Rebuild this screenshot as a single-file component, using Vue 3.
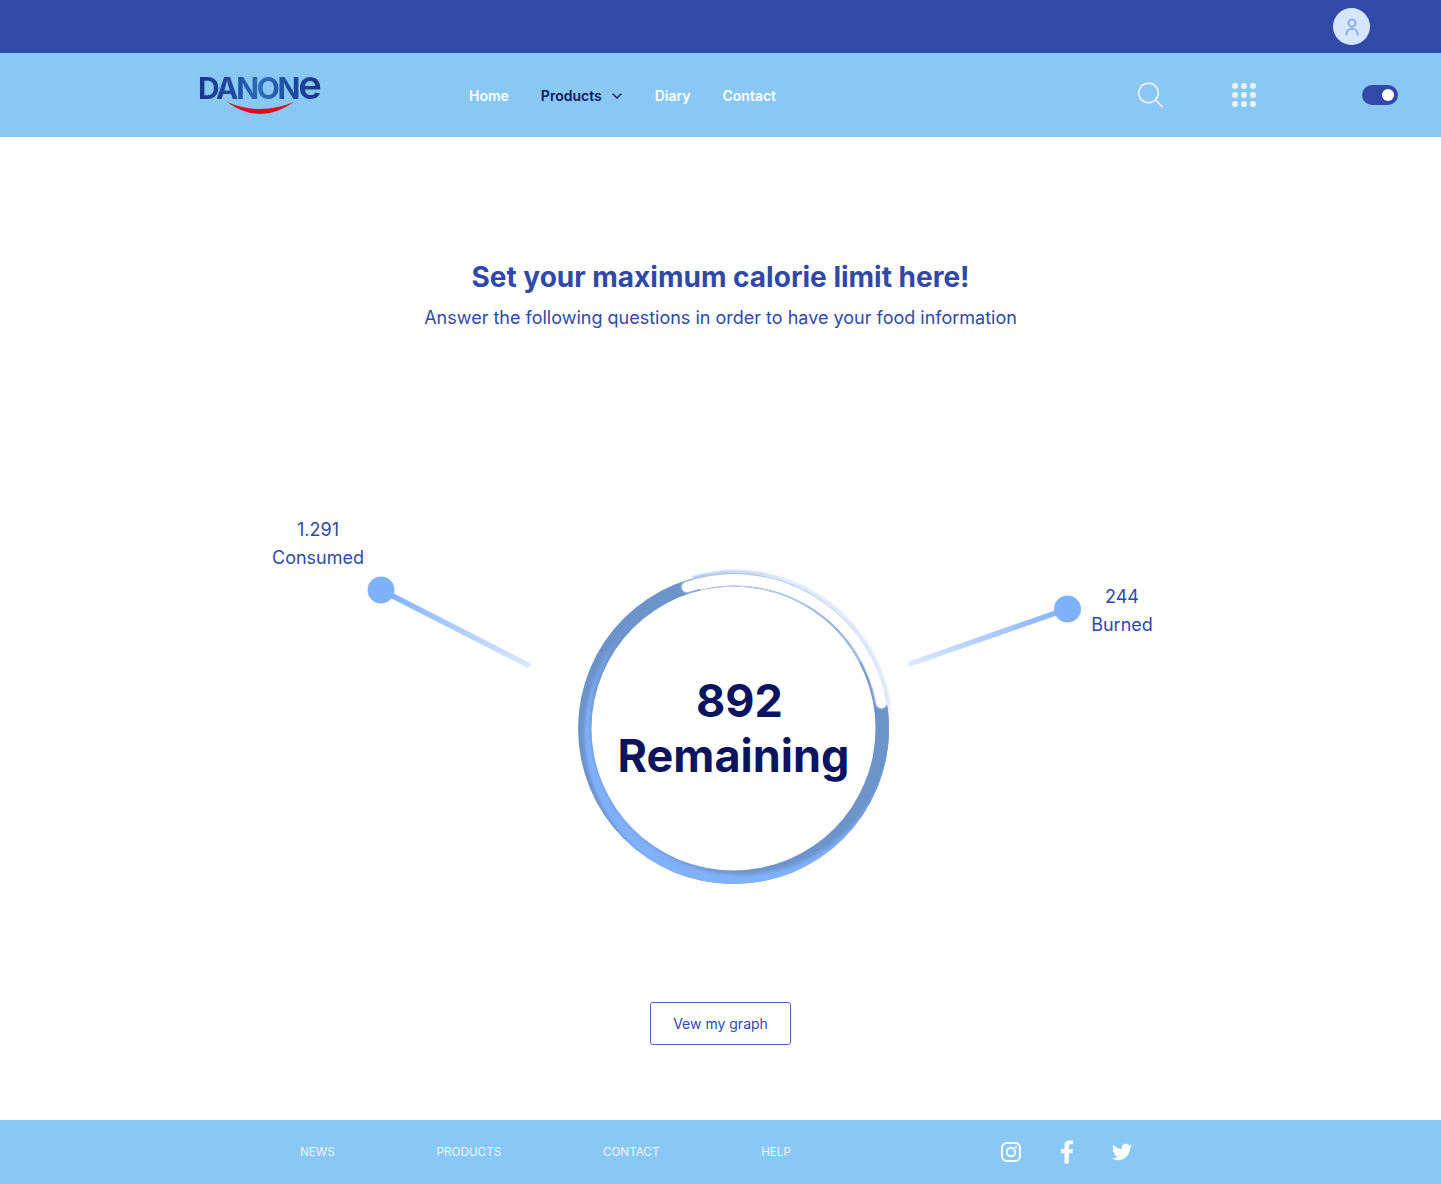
<script setup>
const navLinks = [
  { label: 'Home' },
  { label: 'Products', active: true },
  { label: 'Diary' },
  { label: 'Contact' },
]
const footerLinks = ['NEWS', 'PRODUCTS', 'CONTACT', 'HELP']
const dots = []
for (const y of [4, 13, 22]) for (const x of [4, 13, 22]) dots.push({ x, y })
</script>

<template>
  <div class="page">
    <div class="topbar">
      <div class="avatar">
        <svg width="16" height="20" viewBox="0 0 16 20" fill="none" stroke="#6f9cf5" stroke-width="1.5" stroke-linecap="round">
          <circle cx="8" cy="6" r="3.6" />
          <path d="M2.2 17.8c0-3.7 2.5-6 5.8-6s5.8 2.300 5.800 6" />
        </svg>
      </div>
    </div>

    <header class="navbar">
      <div class="logo">
        <span class="logo-text">DANON<span class="logo-e">e</span></span>
        <svg class="smile" width="68" height="14" viewBox="0 0 68 14">
          <path d="M0 1Q33 25 67 1Q33 15 0 1Z" fill="#e30a1f" />
        </svg>
      </div>
      <nav class="nav">
        <a v-for="l in navLinks" :key="l.label" class="nav-link" :class="{ active: l.active }">
          {{ l.label }}
          <svg v-if="l.active" class="chevron" width="10" height="6" viewBox="0 0 10 6" fill="none" stroke="#0c1460" stroke-width="1.3">
            <path d="M.7.8 5 5 9.3.8" />
          </svg>
        </a>
      </nav>
      <div class="tools">
        <svg width="26" height="26" viewBox="0 0 26 26" fill="none" stroke="#e6f2fc" stroke-width="1.700" stroke-linecap="round">
          <circle cx="11.500" cy="11" r="9.800" />
          <path d="M18.600 18 25 24.600" />
        </svg>
        <svg class="grid-icon" width="26" height="26" viewBox="0 0 26 26" fill="#eaf4fd">
          <circle v-for="(d, i) in dots" :key="i" :cx="d.x" :cy="d.y" r="3" />
        </svg>
        <div class="toggle"><span class="knob"></span></div>
      </div>
    </header>

    <main class="main">
      <h1 class="title">Set your maximum calorie limit here!</h1>
      <p class="subtitle">Answer the following questions in order to have your food information</p>

      <section class="stage">
        <svg class="diagram" width="1441" height="502" viewBox="0 0 1441 502">
          <defs>
            <linearGradient id="lineL" gradientUnits="userSpaceOnUse" x1="381" y1="90" x2="530" y2="166">
              <stop offset="0" stop-color="#80b1fb" />
              <stop offset="1" stop-color="#dbe9ff" />
            </linearGradient>
            <linearGradient id="lineR" gradientUnits="userSpaceOnUse" x1="1067" y1="109" x2="909" y2="164">
              <stop offset="0" stop-color="#80b1fb" />
              <stop offset="1" stop-color="#dbe9ff" />
            </linearGradient>
            <linearGradient id="innerEdge" gradientUnits="userSpaceOnUse" x1="760" y1="85" x2="878" y2="205">
              <stop offset="0" stop-color="#ffffff" />
              <stop offset="0.6" stop-color="#cfdcf2" />
              <stop offset="1" stop-color="#7f9fd3" />
            </linearGradient>
            <linearGradient id="rim" gradientUnits="userSpaceOnUse" x1="690" y1="76" x2="888" y2="205">
              <stop offset="0" stop-color="#8db0e6" />
              <stop offset="0.35" stop-color="#d9e6fb" />
              <stop offset="1" stop-color="#d4e3fc" />
            </linearGradient>
            <clipPath id="outer"><circle cx="733.5" cy="228.5" r="155.5" /></clipPath>
            <filter id="b1" x="-10%" y="-10%" width="120%" height="120%"><feGaussianBlur stdDeviation="2" /></filter>
            <filter id="b2" x="-10%" y="-10%" width="120%" height="120%"><feGaussianBlur stdDeviation="1.4" /></filter>
            <filter id="b3" x="-10%" y="-10%" width="120%" height="120%"><feGaussianBlur stdDeviation="0.8" /></filter>
          </defs>

          <path d="M381 90 528 165" stroke="url(#lineL)" stroke-width="5.500" stroke-linecap="round" />
          <path d="M1067 109 911 163.500" stroke="url(#lineR)" stroke-width="5.500" stroke-linecap="round" />
          <circle cx="381" cy="90" r="13.500" fill="#80b1fb" />
          <circle cx="1067.500" cy="109" r="13.500" fill="#80b1fb" />

          <path d="M720 72.500A156 156 0 0 1 889 212" fill="none" stroke="#dbe7fd" stroke-width="3" filter="url(#b2)" />
          <g clip-path="url(#outer)">
            <circle cx="733.500" cy="228.500" r="156" fill="#6d93cb" />
            <circle cx="739.500" cy="234.500" r="155" fill="#80b1fb" filter="url(#b2)" />
            <circle cx="741.500" cy="223.500" r="151" fill="#6d93cb" filter="url(#b1)" />
          </g>
          <circle cx="733.500" cy="228.500" r="142" fill="#fff" />
          <path d="M700 88A144.500 144.500 0 0 1 878 206" fill="none" stroke="url(#innerEdge)" stroke-width="4" />
          <path d="M693 78A155 155 0 0 1 888.500 205" fill="none" stroke="url(#rim)" stroke-width="2.500" filter="url(#b3)" />
          <path d="M687 87A149.500 149.500 0 0 1 881.500 203" fill="none" stroke="#fff" stroke-width="10.500" stroke-linecap="round" filter="url(#b3)" />
          <path d="M687 87A149.500 149.500 0 0 1 881.500 203" fill="none" stroke="#fff" stroke-width="10" stroke-linecap="round" />
          <path d="M715 87.500A142.500 142.500 0 0 1 860 162" fill="none" stroke="#c3d4f0" stroke-width="1" />
        </svg>

        <div class="label label-left"><span>1.291</span><span>Consumed</span></div>
        <div class="label label-right"><span>244</span><span>Burned</span></div>
        <div class="readout">
          <span class="readout-num">892</span>
          <span class="readout-word">Remaining</span>
        </div>
      </section>

      <button class="graph-btn">Vew my graph</button>
    </main>

    <footer class="footer">
      <nav class="foot-nav">
        <a v-for="f in footerLinks" :key="f">{{ f }}</a>
      </nav>
      <div class="social">
        <svg width="22" height="22" viewBox="0 0 22 22" fill="none" stroke="#fff" stroke-width="2">
          <rect x="2" y="2" width="18" height="18" rx="5" />
          <circle cx="11" cy="11" r="4.200" />
          <circle cx="16" cy="6" r="1.100" fill="#fff" stroke="none" />
        </svg>
        <svg width="14" height="24" viewBox="0 0 14 24" fill="#fff">
          <path d="M13 .4H9.700C6.400.4 4.500 2.400 4.500 5.700V9H.9v4.200h3.600V23.600h4.400V13.200h3.500l.6-4.200H8.900V6.200c0-1.300.6-1.900 1.900-1.900H13z" />
        </svg>
        <svg width="20" height="20" viewBox="0 0 24 24" fill="#fff">
          <path d="M23.95 4.57a10 10 0 0 1-2.82.77 4.96 4.96 0 0 0 2.16-2.72c-.95.55-2 .95-3.12 1.18a4.92 4.92 0 0 0-8.38 4.48C7.690 8.100 4.070 6.130 1.640 3.160a4.820 4.820 0 0 0-.66 2.470c0 1.710.87 3.210 2.190 4.100a4.900 4.900 0 0 1-2.230-.62v.06a4.920 4.920 0 0 0 3.950 4.830 5 5 0 0 1-2.210.08 4.940 4.940 0 0 0 4.600 3.420A9.870 9.870 0 0 1 0 19.540a13.940 13.940 0 0 0 7.550 2.210c9.050 0 14-7.500 14-13.980 0-.21 0-.42-.02-.63a9.940 9.940 0 0 0 2.460-2.550z" />
        </svg>
      </div>
    </footer>
  </div>
</template>

<style scoped>
.page {
  width: 1441px;
  font-family: Inter, "Liberation Sans", sans-serif;
  background: #fff;
  color: #3049a8;
}
.topbar {
  height: 53px;
  background: #314aa8;
  display: flex;
  align-items: center;
  justify-content: flex-end;
  padding-right: 71px;
  box-sizing: border-box;
}
.avatar {
  width: 37px;
  height: 37px;
  border-radius: 50%;
  background: #d6e6ff;
  display: flex;
  align-items: center;
  justify-content: center;
}
.navbar {
  height: 84px;
  background: #89c7f5;
  display: flex;
  align-items: center;
  padding: 0 43px 0 199px;
  box-sizing: border-box;
}
.logo {
  width: 122px;
  height: 60px;
  position: relative;
  margin-top: -3px;
}
.logo-text {
  display: block;
  font-size: 30px;
  line-height: 36px;
  margin-top: 6px;
  margin-left: -1px;
  font-weight: 700;
  letter-spacing: -2.300px;
  white-space: nowrap;
  background: linear-gradient(90deg, #1b3787 0%, #1f4c9f 30%, #2c6fb8 52%, #1f4c9f 72%, #1b3787 100%);
  -webkit-background-clip: text;
  background-clip: text;
  color: transparent;
}
.logo-e {
  font-size: 40px;
  font-weight: 600;
  line-height: 30px;
  letter-spacing: 0;
}
.smile {
  position: absolute;
  left: 28px;
  top: 37px;
}
.nav {
  display: flex;
  align-items: center;
  gap: 32px;
  margin-left: 148px;
  margin-top: 2px;
}
.nav-link {
  font-size: 14px;
  font-weight: 600;
  line-height: 20px;
  color: #fff;
  display: flex;
  align-items: center;
}
.nav-link.active {
  color: #0c1460;
}
.chevron {
  margin: 0 1px 0 10px;
}
.tools {
  margin-left: auto;
  display: flex;
  align-items: center;
}
.grid-icon {
  margin-left: 68px;
}
.toggle {
  width: 36px;
  height: 20px;
  border-radius: 10px;
  background: #314aa8;
  margin-left: 105px;
  display: flex;
  align-items: center;
  justify-content: flex-end;
  padding-right: 4px;
  box-sizing: border-box;
}
.knob {
  width: 12px;
  height: 12px;
  border-radius: 50%;
  background: #fff;
}
.main {
  display: flex;
  flex-direction: column;
  align-items: center;
  padding: 122px 0 75px;
}
.title {
  margin: 0;
  font-size: 28px;
  line-height: 36px;
  font-weight: 700;
  color: #3049a8;
}
.subtitle {
  margin: 9px 0 0;
  font-size: 18px;
  line-height: 28px;
  font-weight: 400;
  color: #3049a8;
}
.stage {
  position: relative;
  width: 1441px;
  height: 502px;
  margin-top: 168px;
}
.diagram {
  position: absolute;
  left: 0;
  top: 0;
}
.label {
  position: absolute;
  display: flex;
  flex-direction: column;
  align-items: center;
  width: 160px;
  font-size: 18px;
  line-height: 28px;
}
.label-left {
  left: 238px;
  top: 16px;
}
.label-right {
  left: 1042px;
  top: 83px;
}
.readout {
  position: absolute;
  left: 583.500px;
  top: 173px;
  width: 300px;
  display: flex;
  flex-direction: column;
  align-items: center;
  font-size: 45px;
  line-height: 56px;
  font-weight: 700;
  color: #0c1460;
}
.readout-num {
  padding-left: 12px;
}
.readout-word {
  margin-top: -1px;
}
.graph-btn {
  width: 141px;
  height: 43px;
  border: 1px solid #4d63b8;
  border-radius: 3px;
  background: #fff;
  color: #3049a8;
  font-family: inherit;
  font-size: 14px;
  font-weight: 400;
  padding: 0;
}
.footer {
  height: 64px;
  background: #89c7f5;
  display: flex;
  align-items: center;
  padding-left: 300px;
  box-sizing: border-box;
}
.foot-nav {
  display: flex;
  gap: 101.700px;
  font-size: 11.700px;
  color: #eef7fe;
}
.social {
  display: flex;
  align-items: center;
  margin-left: 209px;
  gap: 38px;
}
</style>

<style>
html, body { margin: 0; background: #fff; }
</style>
